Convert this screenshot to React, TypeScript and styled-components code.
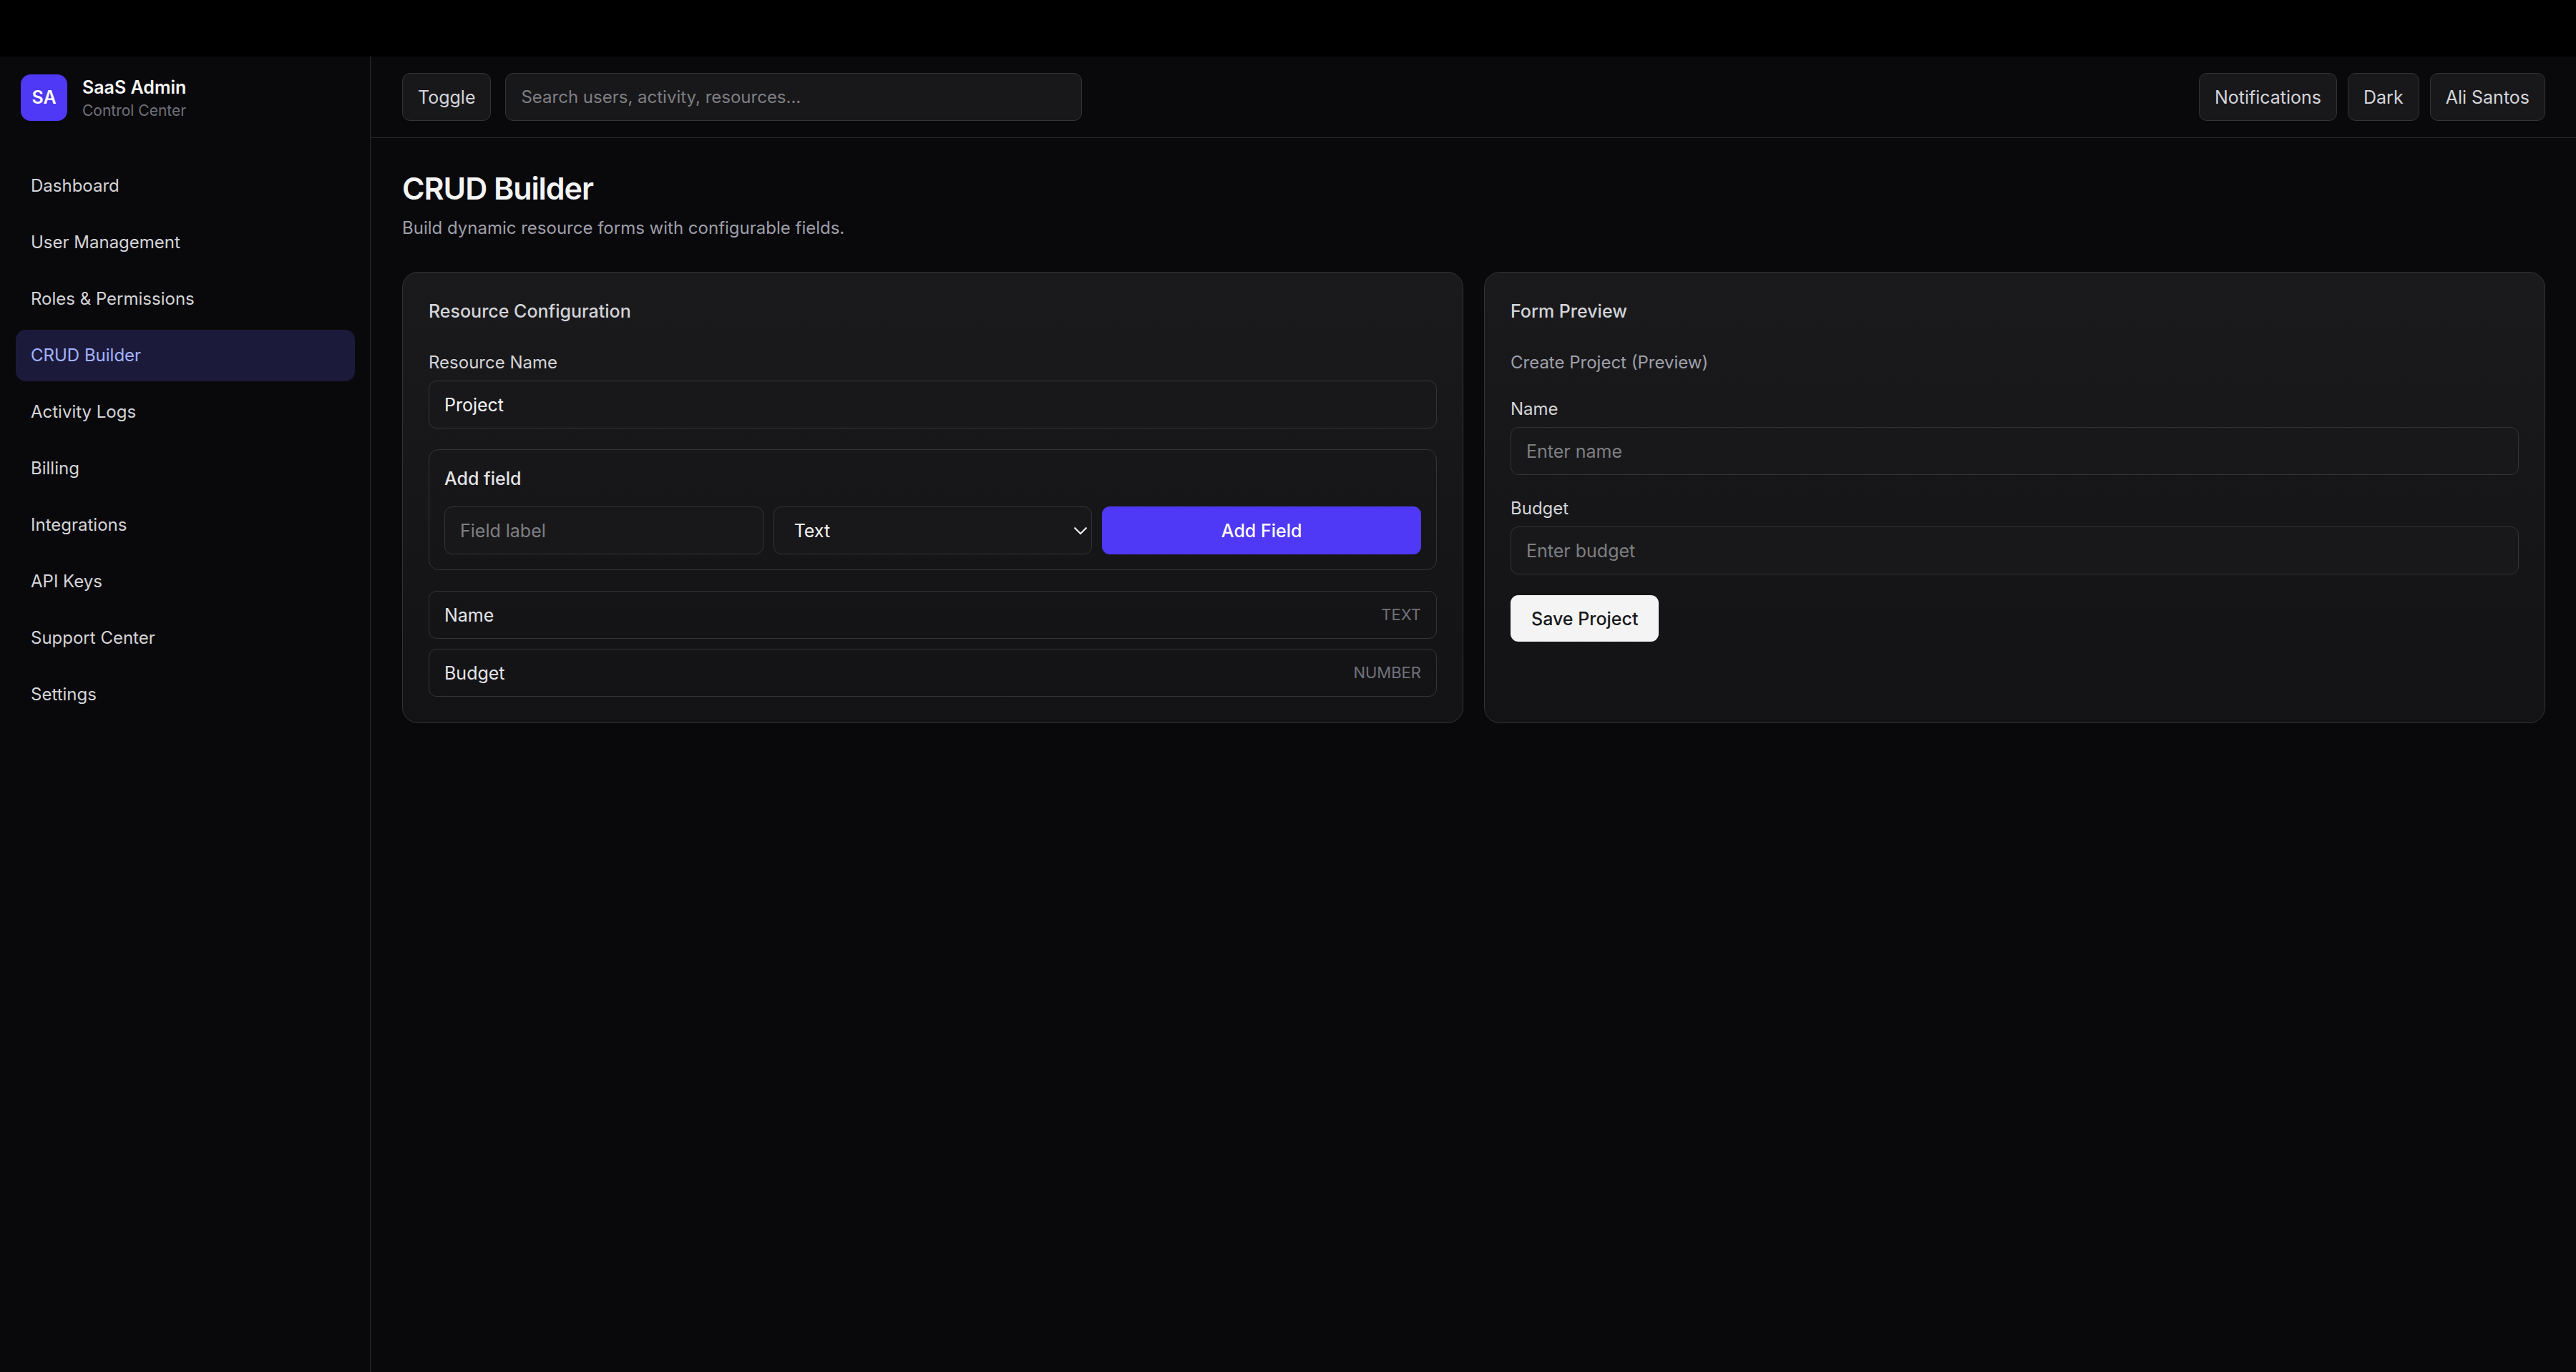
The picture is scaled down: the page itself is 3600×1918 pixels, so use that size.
import React, { useState } from "react";
import styled, { createGlobalStyle } from "styled-components";

const color = {
  page: "#09090b",
  surface: "#18181b",
  line: "#2b2b2e",
  outline: "#343437",
  accent: "#4f39f6",
  bright: "#f4f4f5",
  strong: "#e4e4e7",
  text: "#d4d4d8",
  muted: "#9f9fa9",
  faint: "#71717b",
  placeholder: "#7f7f81",
};

const GlobalStyle = createGlobalStyle`
  *, *::before, *::after { box-sizing: border-box; }
  body {
    margin: 0;
    background: ${color.page};
    color: ${color.strong};
    font-family: Inter, "Liberation Sans", sans-serif;
    font-size: 25px;
    line-height: 36px;
    -webkit-font-smoothing: antialiased;
  }
  h1, h2, h3, p { margin: 0; }
  button, input, select { font: inherit; }
`;

const Page = styled.div`
  display: flex;
  flex-direction: column;
  min-height: 100vh;
`;

const TopStrip = styled.div`
  height: 79px;
  background: #000;
`;

const Shell = styled.div`
  flex: 1;
  display: flex;
`;

const Sidebar = styled.aside`
  flex: none;
  width: 518px;
  border-right: 1px solid ${color.line};
`;

const Brand = styled.div`
  height: 114px;
  display: flex;
  align-items: center;
  gap: 21px;
  padding: 0 29px;
`;

const BrandMark = styled.div`
  display: grid;
  place-items: center;
  width: 65px;
  height: 65px;
  border-radius: 14px;
  background: ${color.accent};
  color: #fff;
  font-weight: 600;
`;

const BrandName = styled.p`
  color: ${color.bright};
  font-weight: 600;
`;

const BrandNote = styled.p`
  color: ${color.faint};
  font-size: 21px;
  line-height: 29px;
`;

const Nav = styled.nav`
  display: flex;
  flex-direction: column;
  gap: 7px;
  padding: 31px 21px 31px 22px;
`;

const NavLink = styled.a<{ $active: boolean }>`
  padding: 18px 21px;
  border-radius: 14px;
  font-size: 24px;
  text-decoration: none;
  color: ${(p) => (p.$active ? "#a3b3ff" : color.text)};
  background: ${(p) => (p.$active ? "#1c1a3b" : "transparent")};
`;

const Content = styled.div`
  flex: 1;
  min-width: 0;
`;

const Header = styled.header`
  height: 114px;
  display: flex;
  align-items: center;
  gap: 20px;
  padding: 0 43px 0 44px;
  border-bottom: 1px solid ${color.line};
`;

const HeaderActions = styled.div`
  display: flex;
  gap: 15px;
  margin-left: auto;
`;

const OutlineButton = styled.button`
  height: 67px;
  padding: 0 21px;
  border: 1px solid ${color.outline};
  border-radius: 11px;
  background: ${color.surface};
  color: ${color.text};
`;

const TextInput = styled.input`
  width: 100%;
  min-width: 0;
  height: 67px;
  padding: 0 21px;
  border: 1px solid ${color.outline};
  border-radius: 11px;
  background: ${color.surface};
  color: ${color.bright};
  font-size: 25px;
  &::placeholder { color: ${color.placeholder}; opacity: 1; }
`;

const SearchInput = styled(TextInput)`
  max-width: 806px;
  font-size: 24px;
`;

const Main = styled.main`
  padding: 43px 43px 43px 44px;
`;

const PageTitle = styled.h1`
  color: ${color.bright};
  font-size: 43px;
  line-height: 54px;
  font-weight: 600;
  letter-spacing: -0.025em;
`;

const PageNote = styled.p`
  margin-top: 11px;
  color: ${color.muted};
  font-size: 24px;
`;

const Cards = styled.div`
  display: grid;
  grid-template-columns: 1fr 1fr;
  gap: 29px;
  margin-top: 43px;
`;

const Card = styled.section`
  padding: 36px;
  border: 1px solid ${color.outline};
  border-radius: 22px;
  background: linear-gradient(180deg, #1a1a1c, #131315);
`;

const CardTitle = styled.h2`
  margin-bottom: 36px;
  color: ${color.text};
  font-size: 25px;
  line-height: 36px;
  font-weight: 500;
`;

const Stack = styled.div`
  display: flex;
  flex-direction: column;
  align-items: stretch;
  gap: 29px;
`;

const PreviewForm = styled.form`
  display: flex;
  flex-direction: column;
  align-items: flex-start;
  gap: 29px;
`;

const PreviewNote = styled.p`
  color: ${color.muted};
  font-size: 24px;
`;

const Field = styled.label`
  display: flex;
  flex-direction: column;
  gap: 7px;
  width: 100%;
  color: ${color.text};
  font-size: 24px;
`;

const AddBox = styled.div`
  padding: 22px 21px 21px;
  border: 1px solid ${color.outline};
  border-radius: 14px;
`;

const AddTitle = styled.h3`
  margin-bottom: 21px;
  color: ${color.strong};
  font-size: 25px;
  line-height: 36px;
  font-weight: 500;
`;

const AddGrid = styled.div`
  display: grid;
  grid-template-columns: repeat(3, minmax(0, 1fr));
  gap: 14px;
`;

const SelectWrap = styled.div`
  position: relative;
`;

const Select = styled.select`
  appearance: none;
  width: 100%;
  height: 67px;
  padding: 0 28px;
  border: 1px solid ${color.outline};
  border-radius: 11px;
  background: ${color.surface};
  color: ${color.bright};
`;

const Chevron = styled.svg`
  position: absolute;
  right: 6px;
  top: 50%;
  width: 20px;
  height: 12px;
  margin-top: -6px;
  pointer-events: none;
`;

const PrimaryButton = styled.button`
  height: 67px;
  border: 0;
  border-radius: 11px;
  background: ${color.accent};
  color: #fff;
  font-weight: 500;
`;

const SaveButton = styled.button`
  height: 65px;
  padding: 0 29px;
  border: 0;
  border-radius: 11px;
  background: ${color.bright};
  color: ${color.surface};
  font-weight: 500;
`;

const FieldList = styled.ul`
  display: flex;
  flex-direction: column;
  gap: 14px;
  margin: 0;
  padding: 0;
  list-style: none;
`;

const FieldRow = styled.li`
  display: flex;
  align-items: center;
  justify-content: space-between;
  height: 67px;
  padding: 0 21px;
  border: 1px solid ${color.outline};
  border-radius: 11px;
  color: ${color.strong};
`;

const FieldType = styled.span`
  color: ${color.faint};
  font-size: 22px;
  line-height: 29px;
  text-transform: uppercase;
`;

const navItems = [
  "Dashboard",
  "User Management",
  "Roles & Permissions",
  "CRUD Builder",
  "Activity Logs",
  "Billing",
  "Integrations",
  "API Keys",
  "Support Center",
  "Settings",
];

const fields = [
  { label: "Name", type: "text" },
  { label: "Budget", type: "number" },
];

export default function App() {
  const [resource, setResource] = useState("Project");

  return (
    <Page>
      <GlobalStyle />
      <TopStrip />
      <Shell>
        <Sidebar>
          <Brand>
            <BrandMark>SA</BrandMark>
            <div>
              <BrandName>SaaS Admin</BrandName>
              <BrandNote>Control Center</BrandNote>
            </div>
          </Brand>
          <Nav aria-label="Main">
            {navItems.map((item) => (
              <NavLink
                key={item}
                href="#"
                $active={item === "CRUD Builder"}
                aria-current={item === "CRUD Builder" ? "page" : undefined}
              >
                {item}
              </NavLink>
            ))}
          </Nav>
        </Sidebar>
        <Content>
          <Header>
            <OutlineButton type="button">Toggle</OutlineButton>
            <SearchInput
              type="search"
              aria-label="Search"
              placeholder="Search users, activity, resources..."
            />
            <HeaderActions>
              <OutlineButton type="button">Notifications</OutlineButton>
              <OutlineButton type="button">Dark</OutlineButton>
              <OutlineButton type="button">Ali Santos</OutlineButton>
            </HeaderActions>
          </Header>
          <Main>
            <PageTitle>CRUD Builder</PageTitle>
            <PageNote>Build dynamic resource forms with configurable fields.</PageNote>
            <Cards>
              <Card>
                <CardTitle>Resource Configuration</CardTitle>
                <Stack>
                  <Field>
                    Resource Name
                    <TextInput
                      value={resource}
                      onChange={(e) => setResource(e.target.value)}
                    />
                  </Field>
                  <AddBox>
                    <AddTitle>Add field</AddTitle>
                    <AddGrid>
                      <TextInput aria-label="Field label" placeholder="Field label" />
                      <SelectWrap>
                        <Select aria-label="Field type" defaultValue="Text">
                          <option>Text</option>
                          <option>Number</option>
                        </Select>
                        <Chevron viewBox="0 0 20 12" aria-hidden="true">
                          <path
                            d="M1.5 1.5 10 10 18.5 1.5"
                            fill="none"
                            stroke={color.bright}
                            strokeWidth="2"
                          />
                        </Chevron>
                      </SelectWrap>
                      <PrimaryButton type="button">Add Field</PrimaryButton>
                    </AddGrid>
                  </AddBox>
                  <FieldList>
                    {fields.map((f) => (
                      <FieldRow key={f.label}>
                        {f.label}
                        <FieldType>{f.type}</FieldType>
                      </FieldRow>
                    ))}
                  </FieldList>
                </Stack>
              </Card>
              <Card>
                <CardTitle>Form Preview</CardTitle>
                <PreviewForm onSubmit={(e) => e.preventDefault()}>
                  <PreviewNote>Create {resource} (Preview)</PreviewNote>
                  {fields.map((f) => (
                    <Field key={f.label}>
                      {f.label}
                      <TextInput
                        type={f.type}
                        placeholder={`Enter ${f.label.toLowerCase()}`}
                      />
                    </Field>
                  ))}
                  <SaveButton type="submit">Save {resource}</SaveButton>
                </PreviewForm>
              </Card>
            </Cards>
          </Main>
        </Content>
      </Shell>
    </Page>
  );
}
